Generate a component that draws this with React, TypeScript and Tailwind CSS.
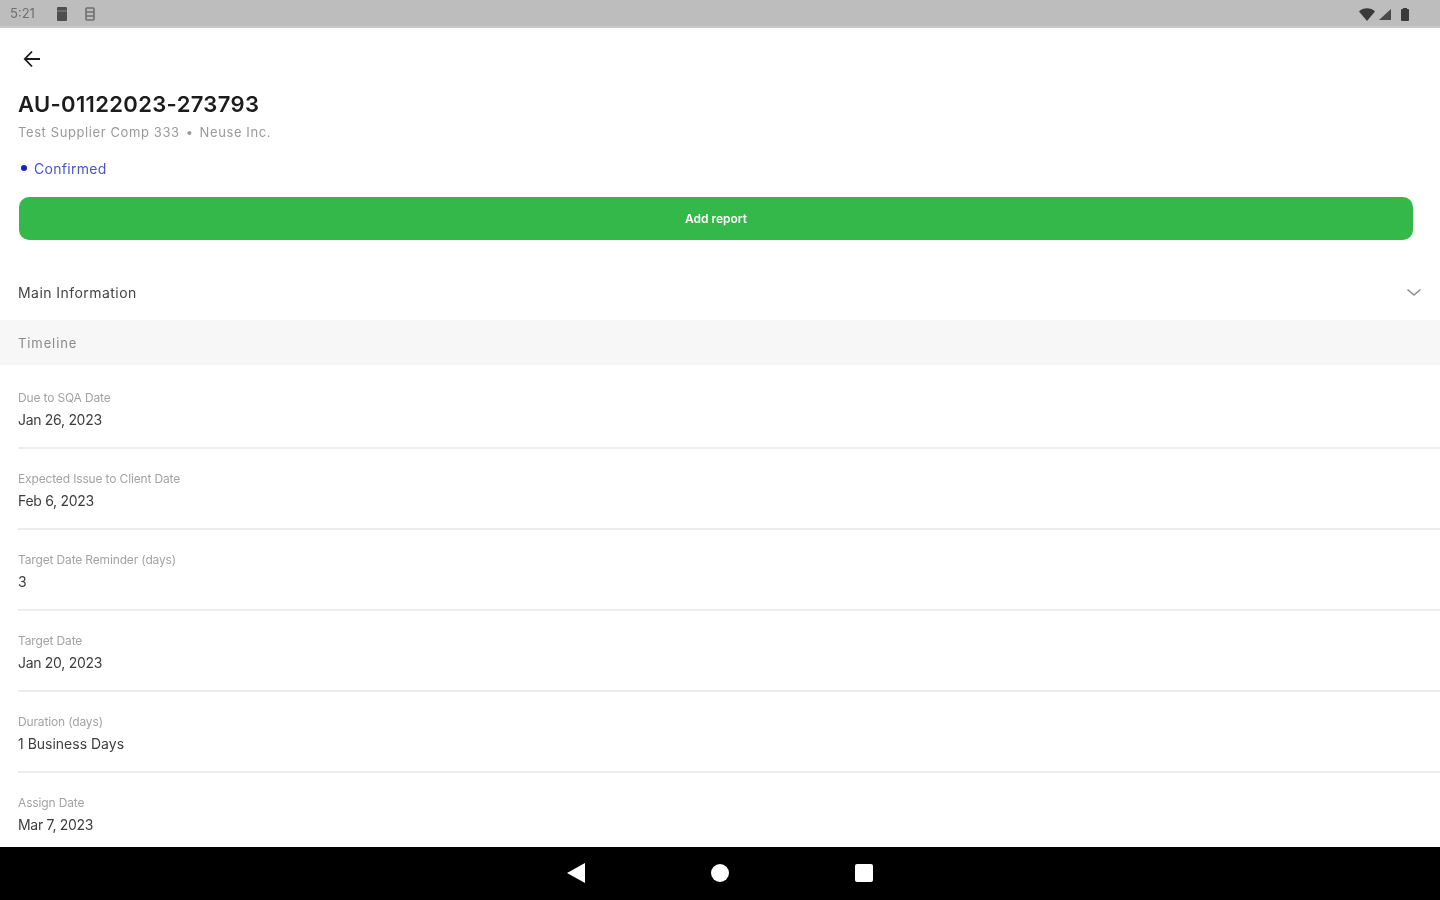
const rows = [
  { label: "Due to SQA Date", value: "Jan 26, 2023" },
  { label: "Expected Issue to Client Date", value: "Feb 6, 2023" },
  { label: "Target Date Reminder (days)", value: "3" },
  { label: "Target Date", value: "Jan 20, 2023" },
  { label: "Duration (days)", value: "1 Business Days", wide: true },
  { label: "Assign Date", value: "Mar 7, 2023" },
];

const StatusBar = () => (
  <div className="flex h-[28px] shrink-0 items-center justify-between border-b-2 border-[#c9c9c9] bg-[#bdbdbd] pt-[2px] pl-[10px] pr-[28px]">
    <div className="flex items-center">
      <span className="w-[28px] text-[13px] text-[#6f6f6f]">5:21</span>
      <svg className="ml-[17px]" width="14" height="16" viewBox="0 0 14 16">
        <path d="M3 1h8a1 1 0 0 1 1 1v12a1 1 0 0 1-1 1H3a1 1 0 0 1-1-1V2a1 1 0 0 1 1-1z" fill="#4f4f4f" />
        <path d="M2 5h10" stroke="#8a8a8a" strokeWidth="1" />
      </svg>
      <svg className="ml-[15px]" width="12" height="16" viewBox="0 0 12 16" fill="none" stroke="#6f6f6f" strokeWidth="1.6">
        <rect x="2" y="2" width="8" height="12" rx="1" />
        <path d="M2 6h8M2 10h8" />
      </svg>
    </div>
    <div className="flex items-center gap-[3px] pr-[2px]">
      <svg width="16" height="13" viewBox="0 0 16 13">
        <path d="M0 3.5C4-.8 12-.8 16 3.5L8 13z" fill="#3a3a3a" />
      </svg>
      <svg width="14" height="13" viewBox="0 0 14 13">
        <path d="M13 1v11H1z" fill="#4a4a4a" />
      </svg>
      <svg className="ml-[5px]" width="10" height="14" viewBox="0 0 10 14">
        <path d="M2 2h1V1h4v1h1a1 1 0 0 1 1 1v10a1 1 0 0 1-1 1H2a1 1 0 0 1-1-1V3a1 1 0 0 1 1-1z" fill="#3a3a3a" />
      </svg>
    </div>
  </div>
);

const NavBar = () => (
  <div className="flex h-[53px] shrink-0 items-center justify-center gap-[126px] bg-black pb-[1px]">
    <svg width="18" height="20" viewBox="0 0 18 20">
      <path d="M18 0v20L0 10z" fill="#fff" />
    </svg>
    <div className="h-[18px] w-[18px] rounded-full bg-white" />
    <div className="h-[18px] w-[18px] rounded-[2px] bg-white" />
  </div>
);

export default function App() {
  return (
    <div className="flex h-[900px] w-[1440px] flex-col overflow-hidden bg-white font-['Inter',sans-serif] blur-[0.6px]">
      <StatusBar />
      <div className="min-h-0 flex-1 overflow-hidden">
        <div className="px-[18px] pt-[21px]">
          <svg className="ml-[4px]" width="20" height="20" viewBox="0 0 20 20" fill="none" stroke="#1a1a1a" strokeWidth="1.8">
            <path d="M18 10H3M10 2.5L2.8 10l7.2 7.5" />
          </svg>
          <h1 className="mt-[20px] text-[22px] leading-[30px] font-semibold tracking-[0.35px] text-[#1c1c1c]">AU-01122023-273793</h1>
          <p className="mt-[3px] flex text-[13px] leading-[20px] tracking-[0.6px] text-[#9a9a9a]">
            <span>Test Supplier Comp 333</span>
            <span className="mx-[6px]">•</span>
            <span>Neuse Inc.</span>
          </p>
          <div className="mt-[16px] flex h-[20px] items-center gap-[7px] text-[14px] tracking-[0.3px] text-[#4a55c4]">
            <span className="ml-[3px] h-[6px] w-[6px] rounded-full bg-[#1a1fc0]" />
            Confirmed
          </div>
          <button className="mt-[19px] ml-[1px] h-[43px] w-[1394px] rounded-[10px] bg-[#34b84a] text-[12px] font-semibold text-white">
            Add report
          </button>
        </div>
        <div className="mt-[32px] flex h-[48px] items-center justify-between px-[18px] pb-[8px]">
          <span className="text-[14px] tracking-[0.45px] text-[#444444]">Main Information</span>
          <svg width="16" height="9" viewBox="0 0 16 9" fill="none" stroke="#8f8f8f" strokeWidth="1.6">
            <path d="M1.5 1.5L8 7l6.5-5.5" />
          </svg>
        </div>
        <div className="flex h-[45px] items-center bg-[#f7f7f7] pt-[2px] pl-[18px] text-[13px] tracking-[0.9px] text-[#8a8a8a]">Timeline</div>
        <div className="mt-[3px] pl-[18px]">
          {rows.map((row) => (
            <div key={row.label} className="flex h-[81px] flex-col justify-center border-b-2 border-[#ececec] pt-[2px]">
              <span className="text-[12px] leading-[20px] tracking-[-0.15px] text-[#a3a3a3]">{row.label}</span>
              <span className={row.wide ? "mt-[2px] text-[14px] leading-[20px] text-[#3d3d3d]" : "mt-[2px] text-[14px] leading-[20px] tracking-[-0.3px] text-[#3d3d3d]"}>{row.value}</span>
            </div>
          ))}
        </div>
      </div>
      <NavBar />
    </div>
  );
}
